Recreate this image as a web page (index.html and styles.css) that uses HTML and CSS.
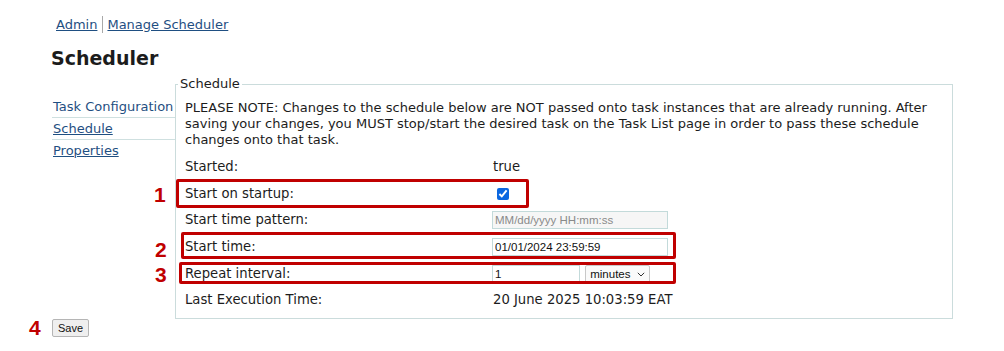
FILE: index.html
```html
<html>
    <head>
        <title>Scheduler</title>
        <link rel="stylesheet" href="styles.css">
    </head>
    <body>
        <div class="page">
            <div class="crumbs">
                <a href="#">Admin</a><span class="sep"></span><a href="#">Manage Scheduler</a>
            </div>
            <h1>Scheduler</h1>
            <div class="layout">
                <ul class="tabs">
                    <li><a href="#" class="plain">Task Configuration</a></li>
                    <li><a href="#">Schedule</a></li>
                    <li><a href="#">Properties</a></li>
                </ul>
                <fieldset class="panel">
                    <legend>Schedule</legend>
                    <p class="note">PLEASE NOTE: Changes to the schedule below are NOT passed onto task instances that are already running. After saving your changes, you MUST stop/start the desired task on the Task List page in order to pass these schedule changes onto that task.</p>
                    <table class="fields">
                        <tr>
                            <td class="label">Started:</td>
                            <td>true</td>
                        </tr>
                        <tr>
                            <td class="label">Start on startup:</td>
                            <td><input type="checkbox" class="check" checked /></td>
                        </tr>
                        <tr>
                            <td class="label">Start time pattern:</td>
                            <td><input type="text" class="field pattern" value="MM/dd/yyyy HH:mm:ss" readonly /></td>
                        </tr>
                        <tr>
                            <td class="label">Start time:</td>
                            <td><input type="text" class="field" value="01/01/2024 23:59:59" /></td>
                        </tr>
                        <tr>
                            <td class="label">Repeat interval:</td>
                            <td>
                                <input type="text" class="field short" value="1" />
                                <span class="unit-wrap">
                                    <select class="unit">
                                        <option>minutes</option>
                                        <option>hours</option>
                                        <option>days</option>
                                    </select>
                                    <svg class="chev" width="8" height="5" viewBox="0 0 8 5"><path d="M0.8 0.8l3.2 3.2 3.2-3.2" fill="none" stroke="#333" stroke-width="1"/></svg>
                                </span>
                            </td>
                        </tr>
                        <tr>
                            <td class="label">Last Execution Time:</td>
                            <td>20 June 2025 10:03:59 EAT</td>
                        </tr>
                    </table>
                </fieldset>
            </div>
            <div class="actions">
                <button class="save">Save</button>
            </div>

            <!-- annotation marks drawn over the form -->
            <div class="box box-1"></div>
            <div class="box box-2"></div>
            <div class="box box-3"></div>
            <span class="num num-1">1</span>
            <span class="num num-2">2</span>
            <span class="num num-3">3</span>
            <span class="num num-4">4</span>
        </div>
    </body>
</html>
```

FILE: styles.css
```css
body {
    margin: 0;
    background: #fff;
    color: #1c1c1c;
    font-family: "DejaVu Sans", Verdana, sans-serif;
    font-size: 13px;
    line-height: 16px;
}
a {
    color: #1f4f82;
}
.page {
    position: relative;
    width: 1004px;
    height: 351px;
    padding: 16px 0 0 52px;
    box-sizing: border-box;
}
.crumbs {
    padding-left: 4px;
    display: flex;
    align-items: center;
}
.sep {
    display: inline-block;
    width: 1px;
    height: 17px;
    background: #a9a9a9;
    margin: 0 4px 0 5px;
}
h1 {
    font-size: 19px;
    line-height: 23px;
    margin: 14px 0 6px -1px;
}
.layout {
    display: flex;
    align-items: flex-start;
}
.tabs {
    list-style: none;
    margin: 0;
    padding: 20px 0 0 0;
    width: 123px;
}
.tabs li {
    padding: 3px 0 2px 1px;
    border-bottom: 1px solid #cfe0e0;
    white-space: nowrap;
}
.tabs li:last-child {
    border-bottom: none;
}
.tabs .plain {
    text-decoration: none;
}
.panel {
    width: 778px;
    box-sizing: border-box;
    margin: 0;
    padding: 0 9px 4px 9px;
    border: 1px solid #cbdcdc;
}
.panel legend {
    padding: 0 2px;
    margin-left: -7px;
}
.note {
    margin: 8px 0 6px 0;
}
.fields {
    border-collapse: collapse;
    font-size: 13.2px;
    line-height: 16px;
    color: #1c1c1c;
}
.fields td {
    padding: 0;
    height: 26.6px;
    vertical-align: middle;
    white-space: nowrap;
}
.fields .label {
    width: 308px;
}
.check {
    margin: 0 0 0 4px;
    width: 12px;
    height: 12px;
    vertical-align: middle;
    accent-color: #0b67e0;
}
.field {
    font-family: "Liberation Sans", Arial, sans-serif;
    font-size: 11.5px;
    width: 176px;
    height: 18px;
    box-sizing: border-box;
    padding: 1px 2px;
    margin: 0 0 0 -1px;
    border: 1px solid #c3dada;
    color: #111;
    vertical-align: middle;
}
.pattern {
    background: #f6f6f6;
    color: #8a8a8a;
}
.short {
    width: 88px;
}
.unit-wrap {
    position: relative;
    display: inline-block;
    vertical-align: middle;
    margin-left: 1px;
}
.unit {
    appearance: none;
    -webkit-appearance: none;
    display: block;
    font-family: "Liberation Sans", Arial, sans-serif;
    font-size: 11.5px;
    width: 65px;
    height: 18px;
    margin: 0;
    padding: 0 0 0 4px;
    border: 1px solid #c8c8c8;
    border-radius: 2px;
    background: #fafafa;
    color: #111;
}
.chev {
    position: absolute;
    right: 5px;
    top: 7px;
    pointer-events: none;
}
.actions {
    margin-top: 0;
}
.save {
    font-family: "Liberation Sans", Arial, sans-serif;
    font-size: 11px;
    height: 18px;
    padding: 0 5px;
    border: 1px solid #b5b5b5;
    border-radius: 2px;
    background: #efefef;
    color: #111;
}
.box {
    position: absolute;
    border: 3px solid #c00000;
    border-radius: 2px;
    box-sizing: border-box;
}
.box-1 {
    left: 176px;
    top: 179px;
    width: 353px;
    height: 29px;
}
.box-2 {
    left: 181px;
    top: 232px;
    width: 495px;
    height: 27px;
}
.box-3 {
    left: 179px;
    top: 262px;
    width: 497px;
    height: 22px;
}
.num {
    position: absolute;
    font-family: "Liberation Sans", Arial, sans-serif;
    font-weight: bold;
    font-size: 21px;
    line-height: 21px;
    color: #c00000;
}
.num-1 {
    left: 154px;
    top: 184px;
}
.num-2 {
    left: 155px;
    top: 239px;
}
.num-3 {
    left: 155px;
    top: 264px;
}
.num-4 {
    left: 29px;
    top: 317px;
}
```
